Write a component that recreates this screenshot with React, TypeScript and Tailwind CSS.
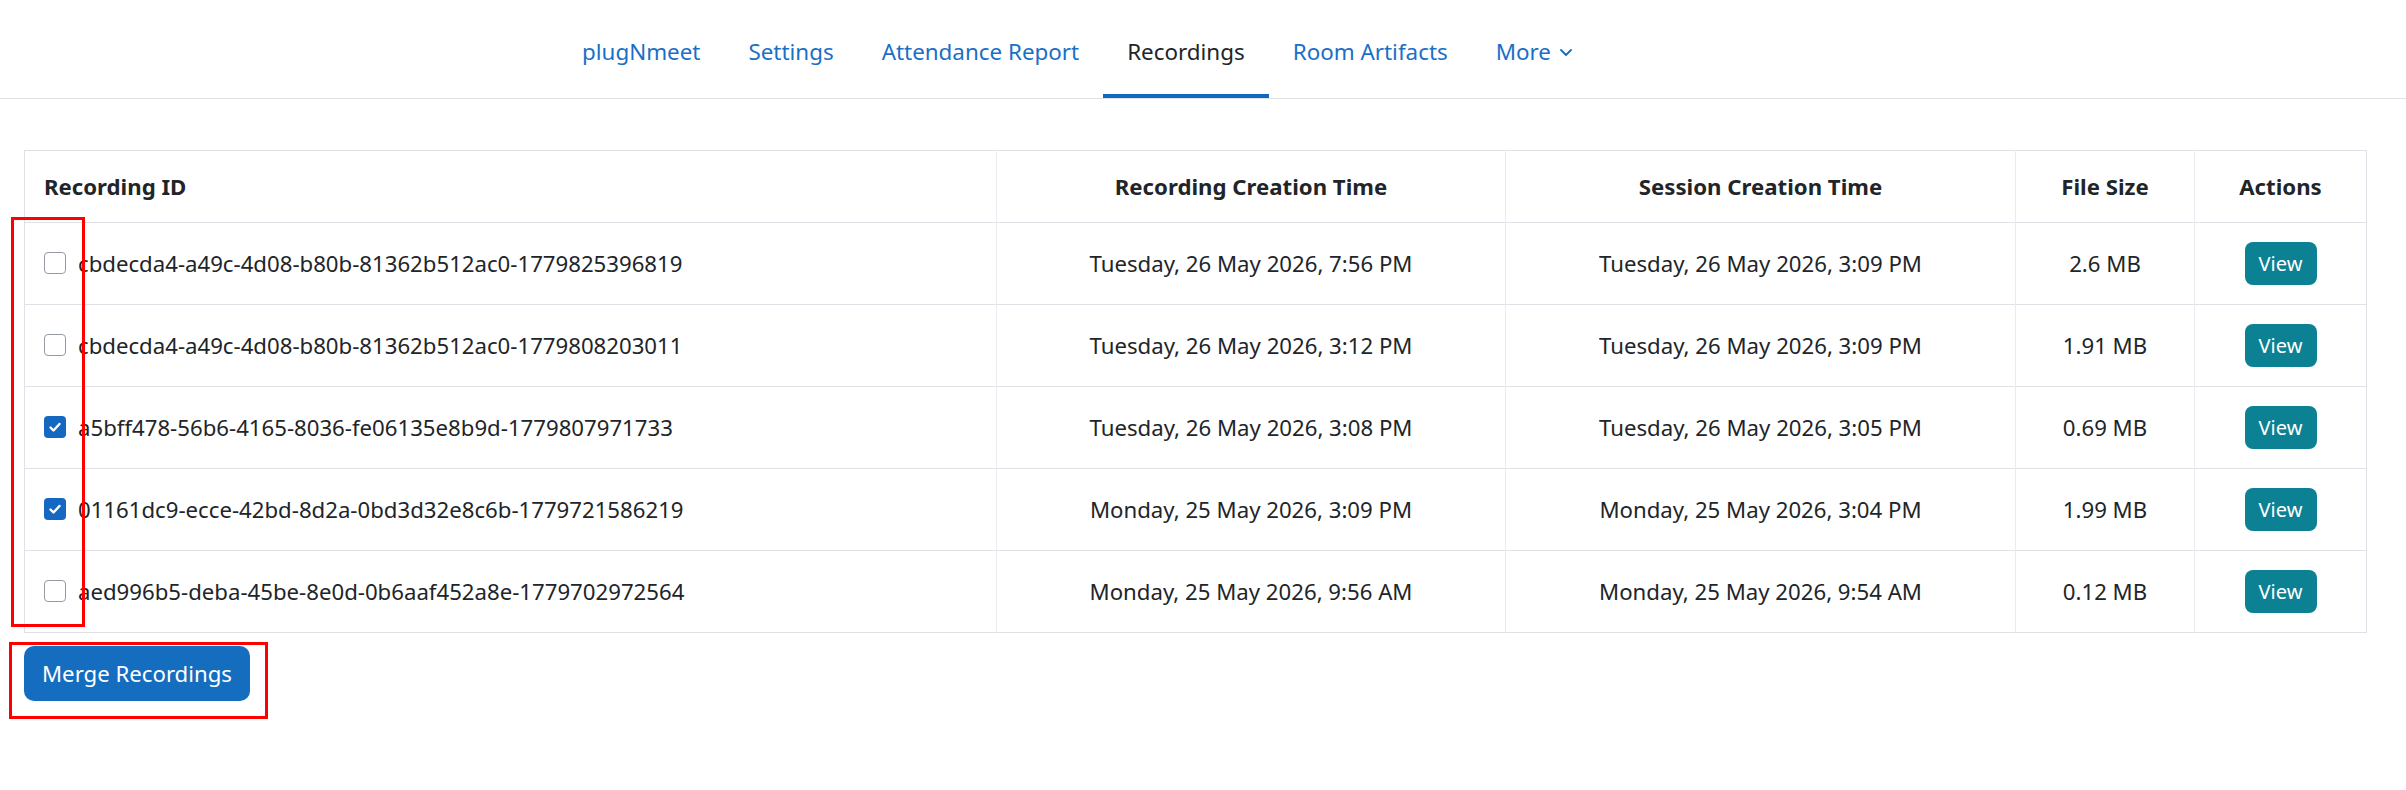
import React from 'react';

const navItems = [
  { label: 'plugNmeet' },
  { label: 'Settings' },
  { label: 'Attendance Report' },
  { label: 'Recordings', active: true },
  { label: 'Room Artifacts' },
];

const recordings = [
  {
    id: 'cbdecda4-a49c-4d08-b80b-81362b512ac0-1779825396819',
    created: 'Tuesday, 26 May 2026, 7:56 PM',
    session: 'Tuesday, 26 May 2026, 3:09 PM',
    size: '2.6 MB',
    checked: false,
  },
  {
    id: 'cbdecda4-a49c-4d08-b80b-81362b512ac0-1779808203011',
    created: 'Tuesday, 26 May 2026, 3:12 PM',
    session: 'Tuesday, 26 May 2026, 3:09 PM',
    size: '1.91 MB',
    checked: false,
  },
  {
    id: 'a5bff478-56b6-4165-8036-fe06135e8b9d-1779807971733',
    created: 'Tuesday, 26 May 2026, 3:08 PM',
    session: 'Tuesday, 26 May 2026, 3:05 PM',
    size: '0.69 MB',
    checked: true,
  },
  {
    id: '01161dc9-ecce-42bd-8d2a-0bd3d32e8c6b-1779721586219',
    created: 'Monday, 25 May 2026, 3:09 PM',
    session: 'Monday, 25 May 2026, 3:04 PM',
    size: '1.99 MB',
    checked: true,
  },
  {
    id: 'aed996b5-deba-45be-8e0d-0b6aaf452a8e-1779702972564',
    created: 'Monday, 25 May 2026, 9:56 AM',
    session: 'Monday, 25 May 2026, 9:54 AM',
    size: '0.12 MB',
    checked: false,
  },
];

const Checkbox = ({ checked }: { checked: boolean }) =>
  checked ? (
    <span className="flex items-center justify-center w-[22px] h-[22px] rounded-[4px] bg-[#1468c2] shrink-0">
      <svg viewBox="0 0 16 16" className="w-[16px] h-[16px]" fill="none">
        <path d="M3.5 8.5l3 3 6-6.5" stroke="#fff" strokeWidth="2.4" strokeLinecap="round" strokeLinejoin="round" />
      </svg>
    </span>
  ) : (
    <span className="block w-[22px] h-[22px] rounded-[4px] border border-[#959aa1] bg-white shrink-0" />
  );

export default function App() {
  return (
    <div className="relative min-h-[790px] bg-white text-[#212529] font-['Noto_Sans',sans-serif]">
      {/* Top tabs */}
      <header className="h-[99px] border-b border-[#dee2e6]">
        <nav className="flex h-full pl-[558px] text-[22.4px]">
          {navItems.map((item) => (
            <a
              key={item.label}
              className={
                item.active
                  ? 'flex items-center px-6 pt-[10px] border-b-4 border-[#1268bd] text-[#212529]'
                  : 'flex items-center px-6 pt-[10px] border-b-4 border-transparent text-[#1a6fc6]'
              }
            >
              {item.label}
            </a>
          ))}
          <a className="flex items-center gap-[9px] px-6 pt-[10px] border-b-4 border-transparent text-[#1a6fc6]">
            More
            <svg viewBox="0 0 12 7" className="w-[12px] h-[7px]" fill="none">
              <path d="M1 1l5 5 5-5" stroke="currentColor" strokeWidth="1.8" strokeLinecap="round" strokeLinejoin="round" />
            </svg>
          </a>
        </nav>
      </header>

      {/* Recordings table */}
      <main className="pl-6 pr-10 pt-[51px]">
        <table className="w-full table-fixed border-collapse border border-[#dee2e6] text-[22.2px]">
          <colgroup>
            <col className="w-[972px]" />
            <col className="w-[509px]" />
            <col className="w-[510px]" />
            <col className="w-[179px]" />
            <col className="w-[172px]" />
          </colgroup>
          <thead>
            <tr className="h-[72px] border-b border-[#dee2e6]">
              <th className="px-[19px] text-left font-bold">Recording ID</th>
              <th className="border-l border-[#e9ecef] font-bold">Recording Creation Time</th>
              <th className="border-l border-[#e9ecef] font-bold">Session Creation Time</th>
              <th className="border-l border-[#e9ecef] font-bold">File Size</th>
              <th className="border-l border-[#e9ecef] font-bold">Actions</th>
            </tr>
          </thead>
          <tbody>
            {recordings.map((r) => (
              <tr key={r.id} className="h-[82px] border-b border-[#dee2e6]">
                <td className="px-[19px]">
                  <div className="flex items-center gap-3">
                    <Checkbox checked={r.checked} />
                    <span>{r.id}</span>
                  </div>
                </td>
                <td className="border-l border-[#e9ecef] text-center">{r.created}</td>
                <td className="border-l border-[#e9ecef] text-center">{r.session}</td>
                <td className="border-l border-[#e9ecef] text-center">{r.size}</td>
                <td className="border-l border-[#e9ecef] text-center">
                  <button className="w-[72px] h-[43px] rounded-[8px] bg-[#0b8193] text-white text-[20px]">View</button>
                </td>
              </tr>
            ))}
          </tbody>
        </table>

        <button className="mt-[13px] h-[55px] px-[18px] rounded-[10px] bg-[#156dc0] text-white text-[22.2px]">
          Merge Recordings
        </button>
      </main>

      {/* Annotation boxes */}
      <div className="absolute left-[11px] top-[217px] w-[74px] h-[410px] border-[3px] border-[#ff0000]" />
      <div className="absolute left-[9px] top-[642px] w-[259px] h-[77px] border-[3px] border-[#ff0000]" />
    </div>
  );
}
